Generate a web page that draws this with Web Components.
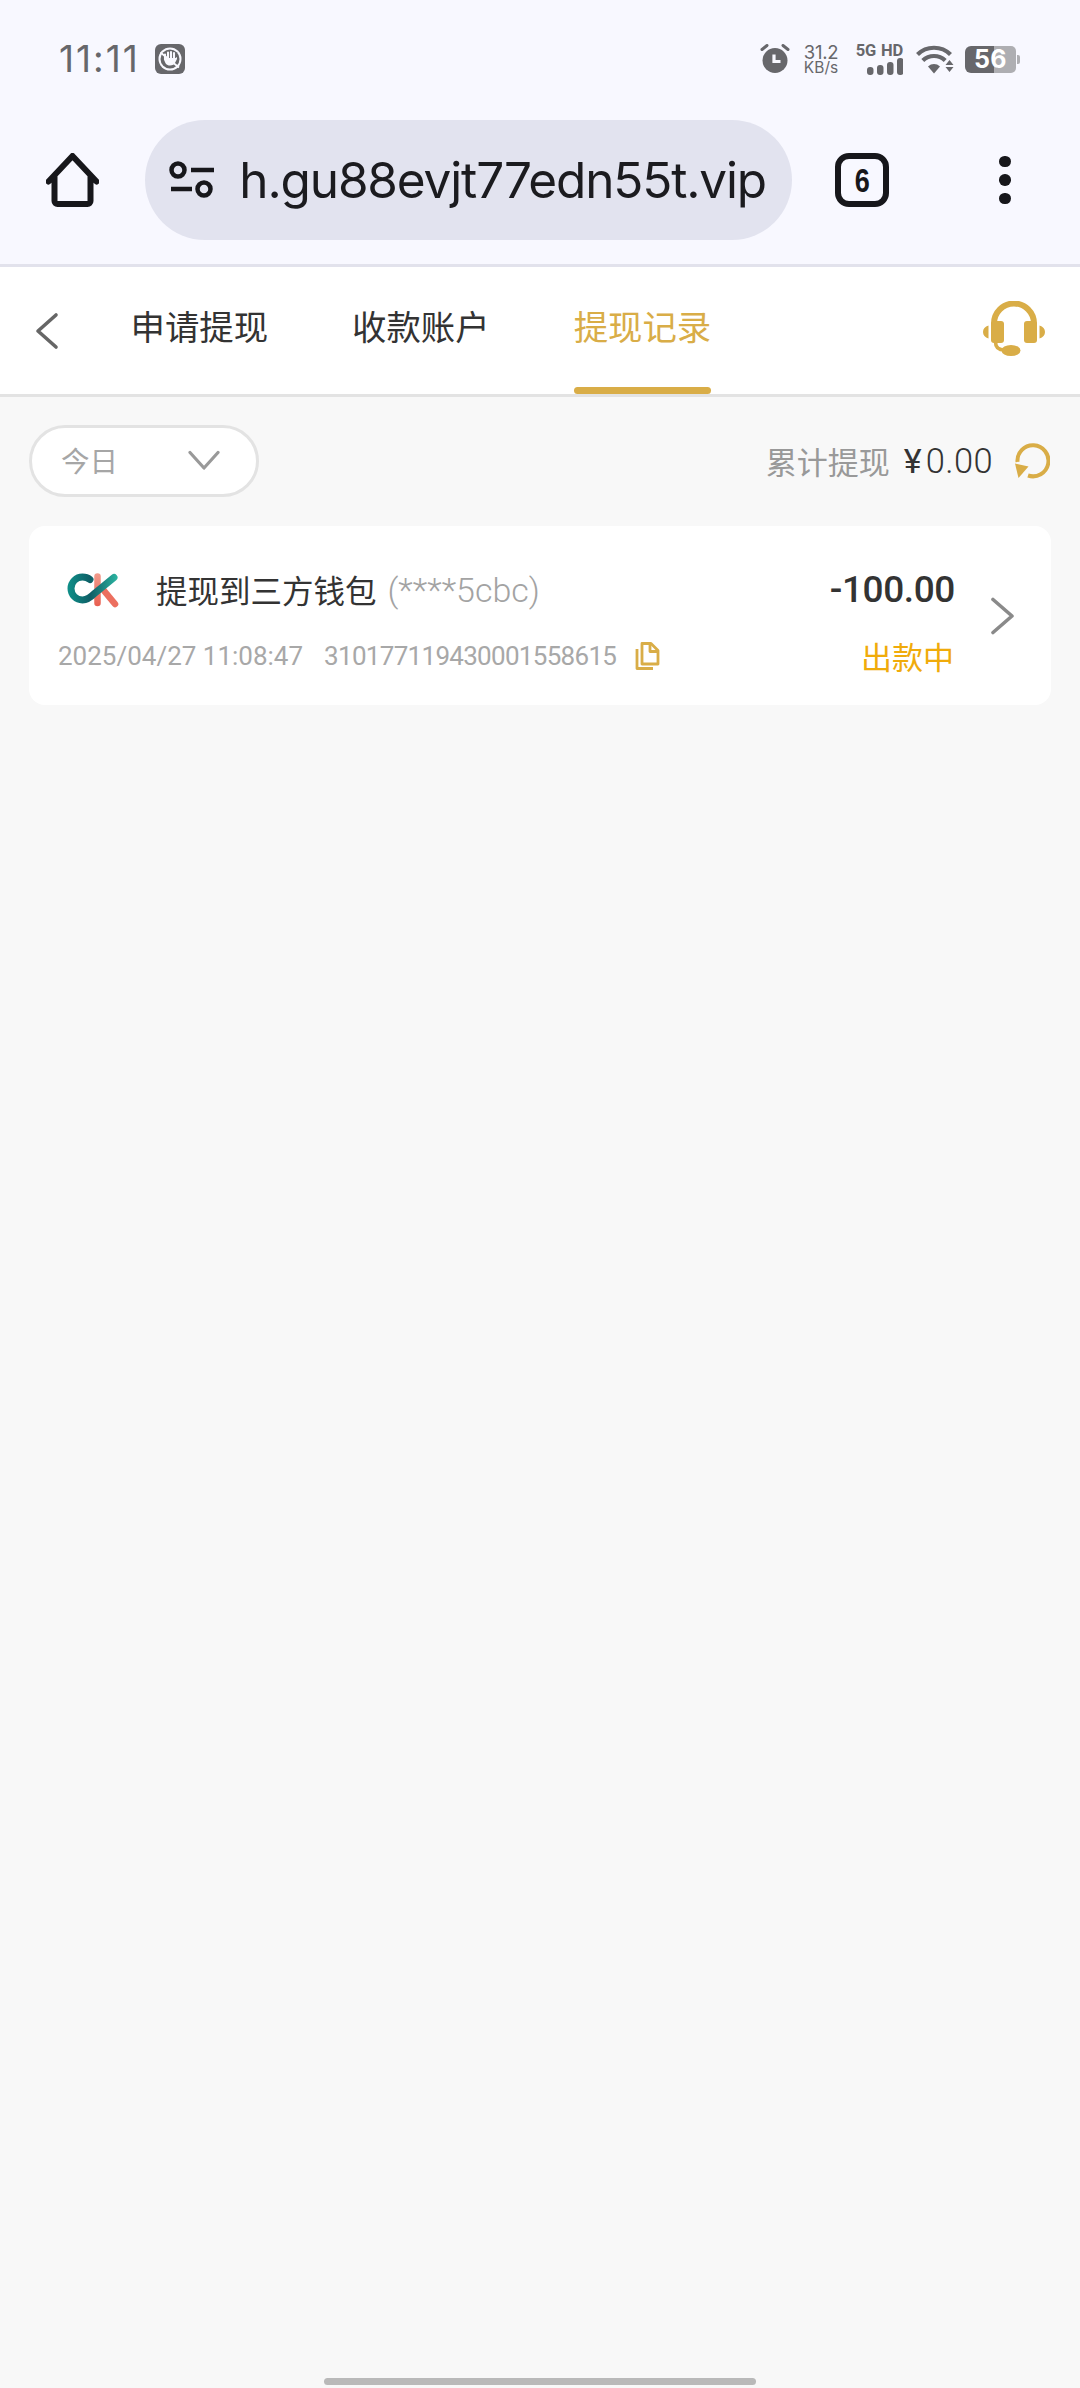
<!DOCTYPE html>
<html lang="zh"><head><meta charset="utf-8"><title>提现记录</title>
<style>
html,body{margin:0;padding:0;background:#f8f8f8}
body{width:1080px;height:2388px;overflow:hidden;font-family:Roboto,"Noto Sans CJK SC",sans-serif}
app-shell{height:2388px}
</style></head><body>
<app-shell>
  <status-bar></status-bar>
  <browser-toolbar url="h.gu88evjt77edn55t.vip" tabs="6"></browser-toolbar>
  <tab-bar></tab-bar>
  <filter-row></filter-row>
  <record-card></record-card>
</app-shell>
<script>
const def=(name,html)=>customElements.define(name,class extends HTMLElement{
  constructor(){super();const r=this.attachShadow({mode:'open'});
    r.innerHTML=typeof html==='function'?html(this):html;}
  connectedCallback(){
    if(typeof html==='function') this.shadowRoot.innerHTML=html(this);
  }
});
def('app-shell',`<style>:host{display:flex;flex-direction:column;width:1080px;background:#f8f8f8}
.grow{flex:1}.bar{height:7px;width:432px;border-radius:4px;background:#b9b9b9;align-self:center;margin-bottom:3px}</style>
<slot></slot><div class="grow"></div><div class="bar"></div>`);
def('status-bar',`<style>:host{display:flex;align-items:center;height:120px;box-sizing:border-box;background:#f8f8ff;padding:0 60px 2px 59px;color:#67676b;font-family:Inter,Roboto,sans-serif}
.time{font-size:37px;letter-spacing:2px;line-height:40px;width:96px}
.sp{flex:1}svg{display:block;flex:none}
.net{width:38px;margin-left:12px;text-align:center;height:32px;display:flex;flex-direction:column;align-items:center}
.net b{font-weight:400;font-size:18.500px;line-height:18px;letter-spacing:-.3px}.net i{font-style:normal;font-size:15.500px;line-height:13px}
.cell{width:49px;margin-left:14px;display:flex;flex-direction:column;align-items:flex-end;height:32px}
.cell b{font:700 16.500px/15px Roboto,sans-serif;letter-spacing:-.2px;white-space:nowrap;word-spacing:1px}
.wifi{margin-left:13px}
.bat{position:relative;width:55px;height:27px;margin-left:11px;flex:none}
.bat span{position:absolute;left:0;top:0;width:51px;text-align:center;font:700 25px/27px Inter,sans-serif;color:#fff;letter-spacing:.5px}
</style>
<div class="time">11:11</div>
<svg width="30" height="30" viewBox="0 0 30 30"><rect width="30" height="30" rx="6" fill="#67676b"/><circle cx="15" cy="15" r="11.500" fill="#f8f8ff"/><circle cx="15" cy="15" r="9.500" fill="#67676b"/><path d="M5.500 8.500 24 23.500" stroke="#f8f8ff" stroke-width="1.800"/><g stroke="#f8f8ff" stroke-width="2.100" stroke-linecap="round"><path d="M10 10.500v5M13 8.500v6M16 8v6.500M19 9v6"/></g><path d="M9 14h11.500l1.500-1c.4 2-.7 3.500-1.500 5-1 2.500-3 3.500-5.500 3.500-3.500 0-5.500-2.500-6-7.500z" fill="#f8f8ff"/></svg>
<div class="sp"></div>
<svg width="30" height="30" viewBox="0 0 30 30"><circle cx="15" cy="16.500" r="12.500" fill="#67676b"/><path d="M2 5.500 7 1.500M28 5.500 23 1.500" stroke="#67676b" stroke-width="3" stroke-linecap="round"/><path d="M14 10.500v7h6.500" fill="none" stroke="#f8f8ff" stroke-width="3.200"/></svg>
<div class="net"><b>31.2</b><i>KB/s</i></div>
<div class="cell"><b>5G HD</b><svg width="36" height="17" viewBox="0 0 36 17"><g fill="#67676b"><rect x="0" y="9" width="6.500" height="8" rx="3"/><rect x="10" y="7" width="6.500" height="10" rx="3"/><rect x="20" y="4" width="6.500" height="13" rx="3"/><rect x="30" y="0" width="6.500" height="17" rx="3"/></g></svg></div>
<svg class="wifi" width="38" height="29" viewBox="0 0 38 29"><g fill="none" stroke="#67676b" stroke-width="4.200"><path d="M1.500 9.500C10.500 .5 25.500 .5 34.500 9.500"/><path d="M6.800 15.500C13 9.500 23 9.500 29.200 15.500"/></g><path d="M12 21.500c3.500-3.300 8.500-3.300 12 0l-6 7z" fill="#67676b"/><path d="M33.500 15l4 5h-8zM29.500 22h8l-4 5z" fill="#67676b"/></svg>
<div class="bat"><svg width="55" height="27" viewBox="0 0 55 27"><path d="M6 0H30V27H6a6 6 0 0 1-6-6V6a6 6 0 0 1 6-6z" fill="#67676b"/><path d="M29 0H46a5 5 0 0 1 5 5V22a5 5 0 0 1-5 5H29z" fill="#aeaeb2"/><path d="M52 9h1a2 2 0 0 1 2 2v5a2 2 0 0 1-2 2h-1z" fill="#aeaeb2"/></svg><span>56</span></div>`);
def('browser-toolbar',el=>`<style>:host{display:flex;align-items:center;height:147px;box-sizing:border-box;padding:0 0 24px 46px;background:#f8f8ff;border-bottom:3px solid #e2e2ec;color:#17171b}
svg{display:block;flex:none}
.pill{width:647px;height:120px;margin-left:46px;border-radius:60px;background:#e2e3ef;display:flex;align-items:center;box-sizing:border-box;padding:0 26px 0 24px;flex:none}
.url{flex:1;margin-left:24px;white-space:nowrap;display:flex;justify-content:flex-end;font:400 49.500px/62px Inter,sans-serif;letter-spacing:-1.150px;color:#1b1b1f}
.tab{margin-left:43px;width:54px;height:54px;box-sizing:border-box;border:6px solid #17171b;border-radius:14px;display:flex;align-items:center;justify-content:center;font:700 33px/1 "Liberation Sans",sans-serif}
.tab span{display:block;transform:scaleX(.82)}
.dots{margin-left:110px;display:flex;flex-direction:column;gap:7px}.dots i{display:block;width:11.500px;height:11.500px;border-radius:50%;background:#17171b}
</style>
<svg width="53" height="54" viewBox="0 0 53 54"><path d="M2.500 28.500 26.500 3l24 25.500M8.500 23v25a3 3 0 0 0 3 3h30a3 3 0 0 0 3-3V23" fill="none" stroke="#17171b" stroke-width="6" stroke-linecap="round" stroke-linejoin="round"/></svg>
<div class="pill"><svg width="46" height="38" viewBox="0 0 46 38"><g fill="none" stroke="#17171b" stroke-width="4.500"><circle cx="9" cy="9" r="6.500"/><circle cx="35" cy="28" r="6.500"/><path d="M22 9h23M2 28h21"/></g></svg><div class="url"><span>${el.getAttribute('url')||''}</span></div></div>
<div class="tab"><span>${el.getAttribute('tabs')||''}</span></div>
<div class="dots"><i></i><i></i><i></i></div>`);
def('tab-bar',`<style>:host{display:flex;align-items:stretch;height:130px;box-sizing:border-box;background:#fff;border-bottom:3px solid #e3e3e3;font:400 34.400px/1 "Noto Sans CJK SC",sans-serif;color:#333}
.back{width:130.500px;display:flex;align-items:center;padding-left:34px;box-sizing:border-box;flex:none}
.t{position:relative;display:flex;align-items:center;white-space:nowrap;margin-right:84px;padding-bottom:11px;box-sizing:border-box}
.t.on{color:#d9ad47}.t.on::after{content:"";position:absolute;left:0;right:0;bottom:0;height:7px;border-radius:4px;background:#d9ad47}
.sp{flex:1}.hs{align-self:center;margin-right:35px;margin-bottom:3px}svg{display:block}</style>
<div class="back"><svg width="25" height="38" viewBox="0 0 25 38"><path d="M22 3 4 19l18 16" fill="none" stroke="#666" stroke-width="3.600" stroke-linecap="round" stroke-linejoin="round"/></svg></div>
<div class="t">申请提现</div><div class="t">收款账户</div><div class="t on">提现记录</div><div class="sp"></div>
<svg class="hs" width="62" height="56" viewBox="0 0 62 56"><g fill="#d9ad47"><path d="M11 26V22.500a20 20 0 0 1 40 0V26" fill="none" stroke="#d9ad47" stroke-width="6"/><rect x="8" y="20" width="13" height="22" rx="3"/><rect x="41" y="20" width="13" height="22" rx="3"/><path d="M5.500 24.500v13C2 36.500 0 34 0 31s2-5.500 5.500-6.500zM56.500 24.500v13c3.500-1 5.500-3.500 5.500-6.500s-2-5.500-5.500-6.500z"/><path d="M12.500 41c0 5 3 8 9 8h6" fill="none" stroke="#d9ad47" stroke-width="3.600"/><ellipse cx="28" cy="49.500" rx="9.500" ry="5.500"/></g></svg>`);
def('filter-row',`<style>:host{display:flex;align-items:center;height:129px;box-sizing:border-box;padding:0 30px 2px 29px;color:#999;font:400 31px/1 "Noto Sans CJK SC",sans-serif}
.sel{width:230px;height:72px;box-sizing:border-box;border:3px solid #e3e3e3;border-radius:36px;background:#fff;display:flex;align-items:center;padding:0 36px 0 29px;justify-content:space-between;font-size:28.500px;color:#a6a6a6}
.sp{flex:1}.amt{color:#333;font:300 34.500px/1 Roboto,sans-serif;margin-left:14px;letter-spacing:.4px;display:flex;align-items:baseline;padding-top:2px}
.amt em{font:400 34px/1 Roboto,sans-serif;font-style:normal;margin-right:4px;letter-spacing:0}
svg{display:block}.r{margin-left:21px}</style>
<div class="sel"><span>今日</span><svg width="32" height="21" viewBox="0 0 32 21"><path d="M2 2.500 16 18 30 2.500" fill="none" stroke="#999" stroke-width="3.200" stroke-linecap="round" stroke-linejoin="round"/></svg></div>
<div class="sp"></div><span>累计提现</span><span class="amt"><em>¥</em>0.00</span>
<svg class="r" width="36" height="37" viewBox="0 0 36 37"><path d="M3.500 20A15.500 15.500 0 1 1 14 33.500" fill="none" stroke="#d9ad47" stroke-width="4"/><path d="M1 21.500 14.500 24.500 4.500 36z" fill="#d9ad47"/></svg>`);
def('record-card',`<style>:host{display:flex;align-items:center;height:179px;margin:0 29px;box-sizing:border-box;background:#fff;border-radius:16px;padding:0 35px 0 29px}
.main{flex:1;min-width:0;display:flex;flex-direction:column;padding-top:2px}
.top{display:flex;align-items:center;height:56px;margin-bottom:22px;white-space:nowrap}
.logo{margin:0 36px 0 9px;flex:none}
.name{font:400 31.500px/1 "Noto Sans CJK SC",sans-serif;color:#333}
.acct{font:300 34px/1 Roboto,sans-serif;color:#a3a3a3;margin-left:11px}
.sub{display:flex;align-items:center;font:400 26px/1 Roboto,sans-serif;color:#a8a8a8;white-space:nowrap;height:32px}
.no{margin-left:21px;letter-spacing:-.7px}.copy{margin-left:19px}svg{display:block}
.right{display:flex;flex-direction:column;align-items:flex-end;margin-right:36px;flex:none;padding-top:2px}
.amt{font:500 37px/56px Roboto,sans-serif;color:#333;height:56px;margin:0 -1px 22px 0;letter-spacing:-.4px}
.st{font:400 31px/32px "Noto Sans CJK SC",sans-serif;color:#f0ab0b}</style>
<div class="main"><div class="top"><svg class="logo" width="53" height="40" viewBox="0 0 53 40"><defs><linearGradient id="g" gradientUnits="userSpaceOnUse" x1="2" y1="0" x2="50" y2="0"><stop offset="0" stop-color="#0f8d87"/><stop offset=".45" stop-color="#0e5e66"/><stop offset="1" stop-color="#2bb3a0"/></linearGradient><linearGradient id="k" gradientUnits="userSpaceOnUse" x1="0" y1="4" x2="0" y2="36"><stop offset="0" stop-color="#f19a8b"/><stop offset="1" stop-color="#e85f50"/></linearGradient></defs><path d="M30.500 6.500V33" stroke="url(#k)" stroke-width="6.500" stroke-linecap="round"/><path d="M36 19.500 48 34" stroke="#ec6f5f" stroke-width="6.500" stroke-linecap="round"/><path d="M23 9.500C20.500 7.500 18 7 15.500 7A11.500 11.500 0 0 0 15.500 30C21 30 25 26 28 23L47 7.500" fill="none" stroke="url(#g)" stroke-width="7" stroke-linecap="round"/></svg><span class="name">提现到三方钱包</span><span class="acct">(****5cbc)</span></div>
<div class="sub"><span class="date">2025/04/27 11:08:47</span><span class="no">310177119430001558615</span><svg class="copy" width="25" height="28" viewBox="0 0 25 28"><g fill="none" stroke="#d9ad47" stroke-width="2.800" stroke-linejoin="round"><path d="M7 1.500h9l7 7V22H7z"/><path d="M15 1.500v8h8" /><path d="M2 7v19.500h16"/></g></svg></div></div>
<div class="right"><div class="amt">-100.00</div><div class="st">出款中</div></div>
<svg width="26" height="38" viewBox="0 0 26 38"><path d="M3 2.500 22 19 3 35.500" fill="none" stroke="#8a8a8a" stroke-width="3.600" stroke-linecap="round" stroke-linejoin="round"/></svg>`);
</script>
</body></html>
